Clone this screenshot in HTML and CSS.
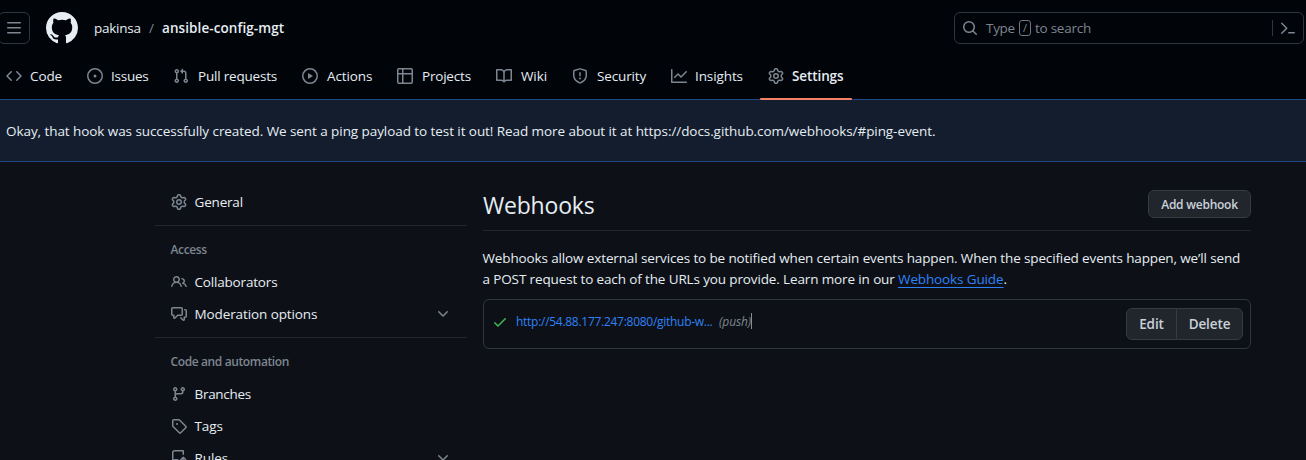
FILE: index.html
```html
<!DOCTYPE html>
<html lang="en">
<head>
<meta charset="utf-8">
<title>Webhooks</title>
<link rel="stylesheet" href="styles.css">
</head>
<body>
<svg class="defs" width="0" height="0">
  <symbol id="gear" viewBox="0 0 16 16"><path d="M8 0a8.2 8.2 0 0 1 .701.031C9.444.095 9.99.645 10.16 1.29l.288 1.107c.018.066.079.158.212.224.231.114.454.243.668.386.123.082.233.09.299.071l1.103-.303c.644-.176 1.392.021 1.82.63.27.385.506.792.704 1.218.315.675.111 1.422-.364 1.891l-.814.806c-.049.048-.098.147-.088.294.016.257.016.515 0 .772-.01.147.038.246.088.294l.814.806c.475.469.679 1.216.364 1.891a7.977 7.977 0 0 1-.704 1.217c-.428.61-1.176.807-1.82.63l-1.102-.302c-.067-.019-.177-.011-.3.071a5.909 5.909 0 0 1-.668.386c-.133.066-.194.158-.211.224l-.29 1.106c-.168.646-.715 1.196-1.458 1.26a8.006 8.006 0 0 1-1.402 0c-.743-.064-1.289-.614-1.458-1.26l-.289-1.106c-.018-.066-.079-.158-.212-.224a5.738 5.738 0 0 1-.668-.386c-.123-.082-.233-.09-.299-.071l-1.103.303c-.644.176-1.392-.021-1.82-.63a8.12 8.12 0 0 1-.704-1.218c-.315-.675-.111-1.422.363-1.891l.815-.806c.05-.048.098-.147.088-.294a6.214 6.214 0 0 1 0-.772c.01-.147-.038-.246-.088-.294l-.815-.806C.635 6.045.431 5.298.746 4.623a7.92 7.92 0 0 1 .704-1.217c.428-.61 1.176-.807 1.82-.63l1.102.302c.067.019.177.011.3-.071.214-.143.437-.272.668-.386.133-.066.194-.158.211-.224l.29-1.106C6.009.645 6.556.095 7.299.03 7.53.01 7.764 0 8 0Zm-.571 1.525c-.036.003-.108.036-.137.146l-.289 1.105c-.147.561-.549.967-.998 1.189-.173.086-.34.183-.5.29-.417.278-.97.423-1.529.27l-1.103-.303c-.109-.03-.175.016-.195.045-.22.312-.412.644-.573.99-.014.031-.021.11.059.19l.815.806c.411.406.562.957.53 1.456a4.709 4.709 0 0 0 0 .582c.032.499-.119 1.05-.53 1.456l-.815.806c-.081.08-.073.159-.059.19.162.346.353.677.573.989.02.03.085.076.195.046l1.102-.303c.56-.153 1.113-.008 1.53.27.161.107.328.204.501.29.447.222.85.629.997 1.189l.289 1.105c.029.109.101.143.137.146a6.6 6.6 0 0 0 1.142 0c.036-.003.108-.036.137-.146l.289-1.105c.147-.561.549-.967.998-1.189.173-.086.34-.183.5-.29.417-.278.97-.423 1.529-.27l1.103.303c.109.029.175-.016.195-.045.22-.313.411-.644.573-.99.014-.031.021-.11-.059-.19l-.815-.806c-.411-.406-.562-.957-.53-1.456a4.709 4.709 0 0 0 0-.582c-.032-.499.119-1.05.53-1.456l.815-.806c.081-.08.073-.159.059-.19a6.464 6.464 0 0 0-.573-.989c-.02-.03-.085-.076-.195-.046l-1.102.303c-.56.153-1.113.008-1.53-.27a4.44 4.44 0 0 0-.501-.29c-.447-.222-.85-.629-.997-1.189l-.289-1.105c-.029-.11-.101-.143-.137-.146a6.6 6.6 0 0 0-1.142 0ZM11 8a3 3 0 1 1-6 0 3 3 0 0 1 6 0ZM9.5 8a1.5 1.5 0 1 0-3.001.001A1.5 1.5 0 0 0 9.5 8Z"/></symbol>
  <symbol id="chevron" viewBox="0 0 16 16"><path d="M12.78 5.22a.749.749 0 0 1 0 1.06l-4.25 4.25a.749.749 0 0 1-1.06 0L3.22 6.28a.749.749 0 1 1 1.06-1.06L8 8.939l3.72-3.719a.749.749 0 0 1 1.06 0Z"/></symbol>
</svg>
<header class="header">
  <div class="topbar">
    <button class="menu-button" aria-label="Menu"><svg class="icon" viewBox="0 0 16 16"><path d="M1 2.75A.75.75 0 0 1 1.75 2h12.5a.75.75 0 0 1 0 1.5H1.75A.75.75 0 0 1 1 2.75Zm0 5A.75.75 0 0 1 1.75 7h12.5a.75.75 0 0 1 0 1.5H1.75A.75.75 0 0 1 1 7.75ZM1.75 12h12.5a.75.75 0 0 1 0 1.5H1.75a.75.75 0 0 1 0-1.5Z"/></svg></button>
    <svg class="logo" viewBox="0 0 16 16"><path d="M8 0c4.42 0 8 3.58 8 8a8.013 8.013 0 0 1-5.45 7.59c-.4.08-.55-.17-.55-.38 0-.27.01-1.13.01-2.2 0-.75-.25-1.23-.54-1.48 1.78-.2 3.65-.88 3.65-3.95 0-.88-.31-1.59-.82-2.15.08-.2.36-1.02-.08-2.12 0 0-.67-.22-2.2.82-.64-.18-1.32-.27-2-.27-.68 0-1.36.09-2 .27-1.53-1.03-2.2-.82-2.2-.82-.44 1.1-.16 1.92-.08 2.12-.51.56-.82 1.28-.82 2.15 0 3.06 1.86 3.75 3.64 3.95-.23.2-.44.55-.51 1.07-.46.21-1.61.55-2.33-.66-.15-.24-.6-.83-1.23-.82-.67.01-.27.38.01.53.34.19.73.9.82 1.13.16.45.68 1.31 2.69.94 0 .67.01 1.3.01 1.49 0 .21-.15.45-.55.38A7.995 7.995 0 0 1 0 8c0-4.42 3.58-8 8-8Z"/></svg>
    <div class="crumbs"><span class="owner">pakinsa</span><span class="slash">/</span><span class="repo">ansible-config-mgt</span></div>
    <div class="search">
      <svg class="icon" viewBox="0 0 16 16"><path d="M10.68 11.74a6 6 0 0 1-7.922-8.982 6 6 0 0 1 8.982 7.922l3.04 3.04a.749.749 0 1 1-1.06 1.06ZM11.5 7a4.499 4.499 0 1 0-8.997 0A4.499 4.499 0 0 0 11.5 7Z"/></svg>
      <span class="hint-type">Type</span><kbd class="key">/</kbd><span class="hint-rest">to search</span>
      <span class="search-divider"></span>
      <svg class="icon" viewBox="0 0 16 16"><path d="M1.22 2.72a.75.75 0 0 1 1.06 0l5 5a.75.75 0 0 1 0 1.06l-5 5a.75.75 0 0 1-1.06-1.06L5.69 8.25 1.22 3.78a.75.75 0 0 1 0-1.06ZM8 12.75a.75.75 0 0 1 .75-.75h5.5a.75.75 0 0 1 0 1.5h-5.5a.75.75 0 0 1-.75-.75Z"/></svg>
    </div>
  </div>
  <nav class="tabs">
    <a class="tab code"><svg class="icon" viewBox="0 0 16 16"><path d="m11.28 3.22 4.25 4.25a.75.75 0 0 1 0 1.06l-4.25 4.25a.749.749 0 1 1-1.06-1.06L13.94 8l-3.72-3.72a.749.749 0 1 1 1.06-1.06Zm-6.56 0a.749.749 0 1 1 1.06 1.06L2.06 8l3.72 3.72a.749.749 0 1 1-1.06 1.06L.47 8.53a.75.75 0 0 1 0-1.06Z"/></svg><span>Code</span></a>
    <a class="tab issues"><svg class="icon" viewBox="0 0 16 16"><path d="M8 9.5a1.5 1.5 0 1 0 0-3 1.5 1.5 0 0 0 0 3Z"/><path d="M8 0a8 8 0 1 1 0 16A8 8 0 0 1 8 0ZM1.5 8a6.5 6.5 0 1 0 13 0 6.5 6.5 0 0 0-13 0Z"/></svg><span>Issues</span></a>
    <a class="tab pulls"><svg class="icon" viewBox="0 0 16 16"><path d="M1.5 3.25a2.25 2.25 0 1 1 3 2.122v5.256a2.251 2.251 0 1 1-1.5 0V5.372A2.25 2.25 0 0 1 1.5 3.25Zm5.677-.177L9.573.677A.25.25 0 0 1 10 .854V2.5h1A2.5 2.5 0 0 1 13.5 5v5.628a2.251 2.251 0 1 1-1.5 0V5a1 1 0 0 0-1-1h-1v1.646a.25.25 0 0 1-.427.177L7.177 3.427a.25.25 0 0 1 0-.354ZM3.75 2.5a.75.75 0 1 0 0 1.5.75.75 0 0 0 0-1.5Zm0 9.5a.75.75 0 1 0 0 1.5.75.75 0 0 0 0-1.5Zm8.25.75a.75.75 0 1 0 1.5 0 .75.75 0 0 0-1.5 0Z"/></svg><span>Pull requests</span></a>
    <a class="tab actions"><svg class="icon" viewBox="0 0 16 16"><path d="M8 0a8 8 0 1 1 0 16A8 8 0 0 1 8 0ZM1.5 8a6.5 6.5 0 1 0 13 0 6.5 6.5 0 0 0-13 0Zm4.879-2.773 4.264 2.559a.25.25 0 0 1 0 .428l-4.264 2.559A.25.25 0 0 1 6 10.559V5.442a.25.25 0 0 1 .379-.215Z"/></svg><span>Actions</span></a>
    <a class="tab projects"><svg class="icon" viewBox="0 0 16 16"><path d="M0 1.75C0 .784.784 0 1.75 0h12.5C15.216 0 16 .784 16 1.75v12.5A1.75 1.75 0 0 1 14.25 16H1.75A1.75 1.75 0 0 1 0 14.25ZM6.5 6.5v8h7.75a.25.25 0 0 0 .25-.25V6.5Zm8-1.5V1.75a.25.25 0 0 0-.25-.25H6.5V5Zm-13 1.5v7.75c0 .138.112.25.25.25H5v-8ZM5 5V1.5H1.75a.25.25 0 0 0-.25.25V5Z"/></svg><span>Projects</span></a>
    <a class="tab wiki"><svg class="icon" viewBox="0 0 16 16"><path d="M0 1.75A.75.75 0 0 1 .75 1h4.253c1.227 0 2.317.59 3 1.501A3.743 3.743 0 0 1 11.006 1h4.245a.75.75 0 0 1 .75.75v10.5a.75.75 0 0 1-.75.75h-4.507a2.25 2.25 0 0 0-1.591.659l-.622.621a.75.75 0 0 1-1.06 0l-.622-.621A2.25 2.25 0 0 0 5.258 13H.75a.75.75 0 0 1-.75-.75Zm7.251 10.324.004-5.073-.002-2.253A2.25 2.25 0 0 0 5.003 2.5H1.5v9h3.757a3.75 3.75 0 0 1 1.994.574ZM8.755 4.75l-.004 7.322a3.752 3.752 0 0 1 1.992-.572H14.5v-9h-3.495a2.25 2.25 0 0 0-2.25 2.25Z"/></svg><span>Wiki</span></a>
    <a class="tab security"><svg class="icon" viewBox="0 0 16 16"><path d="M7.467.133a1.748 1.748 0 0 1 1.066 0l5.25 1.68A1.75 1.75 0 0 1 15 3.48V7c0 1.566-.32 3.182-1.303 4.682-.983 1.498-2.585 2.813-5.032 3.855a1.697 1.697 0 0 1-1.33 0c-2.447-1.042-4.049-2.357-5.032-3.855C1.32 10.182 1 8.566 1 7V3.48a1.75 1.75 0 0 1 1.217-1.667Zm.61 1.429a.25.25 0 0 0-.153 0l-5.25 1.68a.25.25 0 0 0-.174.238V7c0 1.358.275 2.666 1.057 3.86.784 1.194 2.121 2.34 4.366 3.297a.196.196 0 0 0 .154 0c2.245-.956 3.582-2.104 4.366-3.298C13.225 9.666 13.5 8.36 13.5 7V3.48a.251.251 0 0 0-.174-.237l-5.25-1.68ZM8.75 4.75v3a.75.75 0 0 1-1.5 0v-3a.75.75 0 0 1 1.5 0ZM9 10.5a1 1 0 1 1-2 0 1 1 0 0 1 2 0Z"/></svg><span>Security</span></a>
    <a class="tab insights"><svg class="icon" viewBox="0 0 16 16"><path d="M1.5 1.75V13.5h13.75a.75.75 0 0 1 0 1.5H.75a.75.75 0 0 1-.75-.75V1.75a.75.75 0 0 1 1.5 0Zm14.28 2.53-5.25 5.25a.75.75 0 0 1-1.06 0L7 7.06 4.28 9.78a.749.749 0 1 1-1.06-1.06l3.25-3.25a.75.75 0 0 1 1.06 0L10 7.94l4.72-4.72a.749.749 0 1 1 1.06 1.06Z"/></svg><span>Insights</span></a>
    <a class="tab settings selected"><svg class="icon"><use href="#gear"/></svg><span>Settings</span></a>
  </nav>
</header>
<div class="flash"><span>Okay, that hook was successfully created. We sent a ping payload to test it out! Read more about it at https://docs.github.com/webhooks/#ping-event.</span></div>
<div class="layout">
  <aside class="sidebar">
    <a class="item general"><svg class="icon"><use href="#gear"/></svg><span>General</span></a>
    <section class="group">
      <h2 class="heading access">Access</h2>
      <a class="item collaborators"><svg class="icon" viewBox="0 0 16 16"><path d="M2 5.5a3.5 3.5 0 1 1 5.898 2.549 5.508 5.508 0 0 1 3.034 4.084.75.75 0 1 1-1.482.235 4 4 0 0 0-7.9 0 .75.75 0 0 1-1.482-.236A5.507 5.507 0 0 1 3.102 8.05 3.493 3.493 0 0 1 2 5.5ZM11 4a3.001 3.001 0 0 1 2.22 5.018 5.01 5.01 0 0 1 2.56 3.012.749.749 0 1 1-1.429.448 3.507 3.507 0 0 0-2.522-2.372.75.75 0 0 1-.574-.73v-.352a.75.75 0 0 1 .416-.672A1.5 1.5 0 0 0 11 5.5.75.75 0 0 1 11 4Zm-5.5-.5a2 2 0 1 0-.001 3.999A2 2 0 0 0 5.5 3.5Z"/></svg><span>Collaborators</span></a>
      <a class="item moderation"><svg class="icon" viewBox="0 0 16 16"><path d="M1.75 1h8.5c.966 0 1.75.784 1.75 1.75v5.5A1.75 1.75 0 0 1 10.25 10H7.061l-2.574 2.573A1.458 1.458 0 0 1 2 11.543V10h-.25A1.75 1.75 0 0 1 0 8.25v-5.5C0 1.784.784 1 1.75 1ZM1.5 2.75v5.5c0 .138.112.25.25.25h1a.75.75 0 0 1 .75.75v2.19l2.72-2.72a.749.749 0 0 1 .53-.22h3.5a.25.25 0 0 0 .25-.25v-5.5a.25.25 0 0 0-.25-.25h-8.5a.25.25 0 0 0-.25.25Zm13 2a.25.25 0 0 0-.25-.25h-.5a.75.75 0 0 1 0-1.5h.5c.966 0 1.75.784 1.75 1.75v5.5A1.75 1.75 0 0 1 14.25 12H14v1.543a1.458 1.458 0 0 1-2.487 1.03L9.22 12.28a.749.749 0 1 1 1.06-1.06l2.22 2.22v-2.19a.75.75 0 0 1 .75-.75h1a.25.25 0 0 0 .25-.25Z"/></svg><span>Moderation options</span><svg class="icon chevron"><use href="#chevron"/></svg></a>
    </section>
    <section class="group">
      <h2 class="heading automation">Code and automation</h2>
      <a class="item branches"><svg class="icon" viewBox="0 0 16 16"><path d="M9.5 3.25a2.25 2.25 0 1 1 3 2.122V6A2.5 2.5 0 0 1 10 8.5H6a1 1 0 0 0-1 1v1.128a2.251 2.251 0 1 1-1.5 0V5.372a2.25 2.25 0 1 1 1.5 0v1.836A2.493 2.493 0 0 1 6 7h4a1 1 0 0 0 1-1v-.628A2.25 2.25 0 0 1 9.5 3.25Zm-6 0a.75.75 0 1 0 1.5 0 .75.75 0 0 0-1.5 0Zm8.25-.75a.75.75 0 1 0 0 1.5.75.75 0 0 0 0-1.5ZM4.25 12a.75.75 0 1 0 0 1.5.75.75 0 0 0 0-1.5Z"/></svg><span>Branches</span></a>
      <a class="item tags"><svg class="icon" viewBox="0 0 16 16"><path d="M1 7.775V2.75C1 1.784 1.784 1 2.75 1h5.025c.464 0 .91.184 1.238.513l6.25 6.25a1.75 1.75 0 0 1 0 2.474l-5.026 5.026a1.75 1.75 0 0 1-2.474 0l-6.25-6.25A1.752 1.752 0 0 1 1 7.775Zm1.5 0c0 .066.026.13.073.177l6.25 6.25a.25.25 0 0 0 .354 0l5.025-5.025a.25.25 0 0 0 0-.354l-6.25-6.25a.25.25 0 0 0-.177-.073H2.75a.25.25 0 0 0-.25.25ZM6 5a1 1 0 1 1 0 2 1 1 0 0 1 0-2Z"/></svg><span>Tags</span></a>
      <a class="item rules"><svg class="icon" viewBox="0 0 16 16"><path d="M1 2.5A2.5 2.5 0 0 1 3.5 0h8.75a.75.75 0 0 1 .75.75v3.5a.75.75 0 0 1-1.5 0V1.5h-8a1 1 0 0 0-1 1v6.708A2.493 2.493 0 0 1 3.5 9h3.25a.75.75 0 0 1 0 1.5H3.5a1 1 0 0 0 0 2h5.75a.75.75 0 0 1 0 1.5H3.5A2.5 2.5 0 0 1 1 11.5Zm13.23 7.79-1.224-1.224v6.184a.75.75 0 0 1-1.5 0V9.066L10.28 10.29a.75.75 0 0 1-1.06-1.061l2.505-2.504a.75.75 0 0 1 1.06 0L15.29 9.23a.751.751 0 0 1-1.06 1.06Z"/></svg><span>Rules</span><svg class="icon chevron"><use href="#chevron"/></svg></a>
    </section>
  </aside>
  <main class="main">
    <div class="subhead"><h1 class="title">Webhooks</h1><button class="button small">Add webhook</button></div>
    <p class="intro"><span class="line first">Webhooks allow external services to be notified when certain events happen. When the specified events happen, we’ll send</span><span class="line second">a POST request to each of the URLs you provide. Learn more in our <a class="guide">Webhooks Guide</a>.</span></p>
    <div class="hook">
      <svg class="icon check" viewBox="0 0 16 16"><path d="M13.78 4.22a.75.75 0 0 1 0 1.06l-7.25 7.25a.75.75 0 0 1-1.06 0L2.22 9.28a.751.751 0 0 1 1.06-1.06L6 10.94l6.72-6.72a.75.75 0 0 1 1.06 0Z"/></svg>
      <a class="url">http://54.88.177.247:8080/github-w...</a><em class="event">(push)</em><span class="caret"></span>
      <div class="button-group"><button class="button edit">Edit</button><button class="button delete">Delete</button></div>
    </div>
  </main>
</div>
</body>
</html>
```
FILE: styles.css
```css
* { box-sizing: border-box; }
body {
  margin: 0;
  height: 460px;
  overflow: hidden;
  background: #0d1117;
  color: #e6edf3;
  font: 13.5px/20px "Open Sans", "Noto Sans", sans-serif;
  letter-spacing: -0.1px;
  white-space: nowrap;
}
h1, h2, p { margin: 0; }
button { font-family: inherit; letter-spacing: inherit; }
.defs { display: block; }
.icon { display: block; flex: none; width: 16px; height: 16px; fill: #7d8590; }

.header { height: 99px; background: #010409; }
.topbar { display: flex; align-items: center; height: 56px; padding-right: 2px; }
.menu-button {
  display: grid; place-items: center;
  width: 32px; height: 32px; margin-left: -2px; padding: 0;
  border: 1px solid #30363d; border-radius: 6px; background: none;
}
.logo { width: 32px; height: 32px; margin-left: 16px; fill: #e6edf3; }
.crumbs { display: flex; margin-left: 16px; }
.owner { width: 55px; letter-spacing: -0.25px; }
.slash { width: 13px; color: #7d8590; }
.repo { font-weight: 600; letter-spacing: 0.08px; }
.search {
  display: flex; align-items: center;
  width: 350px; height: 32px; margin-left: auto; padding: 0 7px;
  border: 1px solid #30363d; border-radius: 6px; color: #7d8590;
}
.hint-type { width: 33px; margin-left: 8px; letter-spacing: -0.3px; }
.key {
  width: 12px; height: 16px; border: 1px solid #6e7681; border-radius: 3px;
  font: 11px/13px "Open Sans", sans-serif; text-align: center;
}
.hint-rest { margin-left: 4px; letter-spacing: -0.25px; }
.search-divider { width: 1px; height: 16px; margin: 0 7px 0 auto; background: #30363d; }

.tabs { display: flex; height: 44px; padding-left: 6px; }
.tab { position: relative; display: flex; gap: 8px; align-items: center; height: 40px; }
.code { width: 81px; }
.issues { width: 86px; letter-spacing: -0.25px; }
.pulls { width: 129px; gap: 9px; letter-spacing: -0.2px; }
.actions { width: 95px; gap: 9px; }
.projects { width: 99px; gap: 9px; letter-spacing: -0.2px; }
.wiki { width: 76px; gap: 9px; }
.security { width: 99px; gap: 9px; letter-spacing: -0.15px; }
.insights { width: 97px; }
.settings { width: 76px; }
.selected { font-weight: 600; }
.selected::after {
  content: ""; position: absolute; left: -8px; right: -8px; bottom: -4px;
  height: 2px; border-radius: 1px; background: #f78166;
}

.flash {
  display: flex; align-items: center; height: 63px; padding-left: 6px;
  border: solid #1f4883; border-width: 1px 0; background: #131d2e;
  letter-spacing: -0.07px;
}

.layout { display: flex; gap: 16px; padding-left: 155px; }
.sidebar { width: 312px; padding-top: 24px; }
.item { display: flex; align-items: center; gap: 7.5px; height: 32px; padding: 0 16px; }
.general, .collaborators { letter-spacing: -0.18px; }
.branches { letter-spacing: -0.3px; }
.chevron { margin-left: auto; }
.group { margin-top: 7px; padding-top: 8px; border-top: 1px solid #21262d; }
.heading { height: 32px; padding-left: 15.5px; color: #7d8590; font-size: 12px; line-height: 32px; font-weight: 600; letter-spacing: -0.38px; }

.main { width: 768px; padding-top: 28px; }
.subhead { display: flex; justify-content: space-between; height: 41px; border-bottom: 1px solid #21262d; }
.title { font-size: 23px; font-weight: 400; line-height: 31px; letter-spacing: -0.2px; }
.button {
  height: 32px; padding: 0; border: 1px solid #363b42; border-radius: 6px;
  background: #21262d; color: #c9d1d9; font-size: 13.5px; font-weight: 600;
}
.small { width: 103px; height: 28px; font-size: 12px; letter-spacing: -0.25px; }
.intro { margin-top: 17px; line-height: 21px; letter-spacing: -0.13px; }
.line { display: block; margin-left: -0.5px; }
.guide { color: #2f81f7; text-decoration: underline; text-underline-offset: 3px; }
.hook {
  display: flex; align-items: flex-start; height: 50px; margin-top: 9px; padding: 8px 7px 0 8px;
  border: 1px solid #30363d; border-radius: 6px; font-size: 12px; line-height: 28px;
}
.check { margin-top: 6px; fill: #3fb950; }
.url { width: 203px; margin-left: 8px; color: #2f81f7; letter-spacing: -0.28px; }
.event { color: #7d8590; width: 32px; }
.caret { width: 1px; height: 16px; margin-top: 5px; background: #848d97; }
.button-group { display: flex; margin-left: auto; }
.edit { width: 51px; border-radius: 6px 0 0 6px; }
.delete { width: 67px; margin-left: -1px; border-radius: 0 6px 6px 0; }
```
